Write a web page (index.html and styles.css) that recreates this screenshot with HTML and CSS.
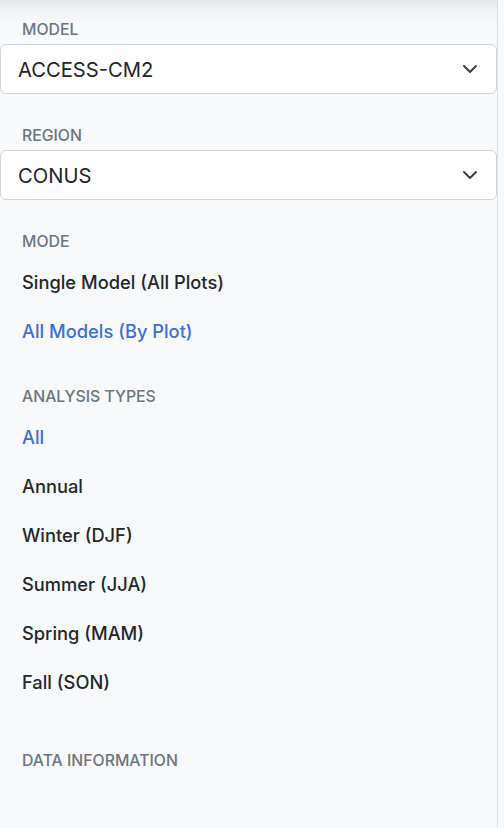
FILE: index.html
```html
<!DOCTYPE html>
<html lang="en">
<head>
<meta charset="utf-8">
<title>Sidebar</title>
<link rel="stylesheet" href="styles.css">
</head>
<body>
<aside class="sidebar">
  <section class="group">
    <div class="label">Model</div>
    <div class="select">
      <span class="select-value">ACCESS-CM2</span>
      <svg class="chevron" width="14" height="8" viewBox="0 0 14 8"><path d="M1 1l6 6 6-6" fill="none" stroke="#343a40" stroke-width="1.8" stroke-linecap="round" stroke-linejoin="round"/></svg>
    </div>
  </section>
  <section class="group">
    <div class="label">Region</div>
    <div class="select">
      <span class="select-value">CONUS</span>
      <svg class="chevron" width="14" height="8" viewBox="0 0 14 8"><path d="M1 1l6 6 6-6" fill="none" stroke="#343a40" stroke-width="1.8" stroke-linecap="round" stroke-linejoin="round"/></svg>
    </div>
  </section>
  <section class="group group-mode">
    <div class="label">Mode</div>
    <ul class="nav">
      <li class="nav-item">Single Model (All Plots)</li>
      <li class="nav-item active">All Models (By Plot)</li>
    </ul>
  </section>
  <section class="group group-types">
    <div class="label">Analysis Types</div>
    <ul class="nav">
      <li class="nav-item active">All</li>
      <li class="nav-item">Annual</li>
      <li class="nav-item">Winter (DJF)</li>
      <li class="nav-item">Summer (JJA)</li>
      <li class="nav-item">Spring (MAM)</li>
      <li class="nav-item">Fall (SON)</li>
    </ul>
  </section>
  <section class="group">
    <div class="label">Data Information</div>
  </section>
</aside>
</body>
</html>
```
FILE: styles.css
```css
html, body {
  margin: 0;
  padding: 0;
  height: 100%;
  background: #f8f9fa;
}
body {
  font-family: Inter, "Liberation Sans", Arial, sans-serif;
  color: #212529;
  overflow: hidden;
}
.sidebar {
  width: 498px;
  height: 828px;
  box-sizing: border-box;
  border-right: 1px solid #dcdfe3;
  background: linear-gradient(to bottom, #e4e5e6 0, #f1f2f3 10px, #f8f9fa 24px);
  padding-top: 19px;
}
.group {
  display: flex;
  flex-direction: column;
  margin-bottom: 31px;
}
.label {
  padding: 1px 0 0 22px;
  font-size: 15.8px;
  line-height: 20px;
  font-weight: 500;
  text-transform: uppercase;
  color: #6c757d;
}
.select {
  margin-top: 4px;
  width: 497px;
  height: 50px;
  box-sizing: border-box;
  border: 1px solid #ced4da;
  border-radius: 6px;
  background: #fff;
  display: flex;
  align-items: center;
  justify-content: space-between;
  padding: 0 19px 0 17px;
}
.select-value {
  font-size: 20.2px;
  color: #212529;
}
.chevron {
  display: block;
}
.nav {
  list-style: none;
  margin: 6px 0 0;
  padding: 0;
}
.nav-item {
  padding: 14px 22px;
  font-size: 18.3px;
  line-height: 21px;
  font-weight: 500;
  color: #23272b;
}
.nav-item.active {
  color: #3a6fd8;
}
.group-mode {
  margin-bottom: 30px;
}
.group-types {
  margin-bottom: 43px;
}
```
